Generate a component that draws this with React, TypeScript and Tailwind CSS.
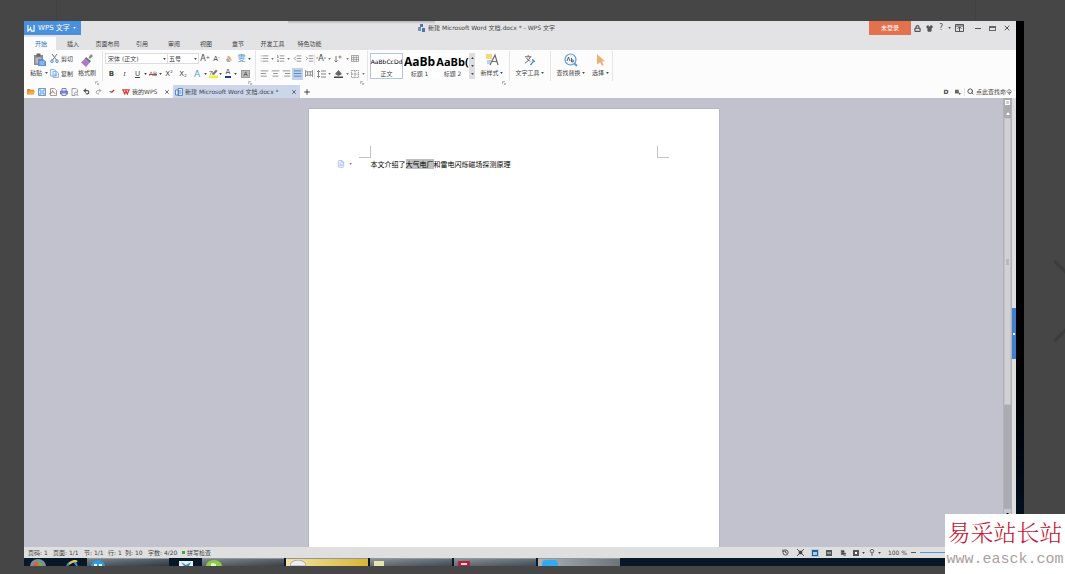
import { useState } from "react";
import type { ReactNode } from "react";
import {
  AlignCenter,
  AlignJustify,
  AlignLeft,
  AlignRight,
  ChevronRight,
  FileText,
  History,
  IndentDecrease,
  IndentIncrease,
  List,
  ListOrdered,
  Lock,
  Plus,
  Redo2,
  Search,
  Shirt,
  Undo2,
  X,
} from "lucide-react";

const TABS = ["开始", "插入", "页面布局", "引用", "审阅", "视图", "章节", "开发工具", "特色功能"];

const STYLES = [
  { name: "正文", sample: "AaBbCcDd", cls: "text-[6px]" },
  { name: "标题 1", sample: "AaBb", cls: "font-['Open_Sans',sans-serif] text-[12px] font-bold" },
  { name: "标题 2", sample: "AaBb(", cls: "font-['Open_Sans',sans-serif] text-[11px] font-bold" },
];

function Caret({ className = "w-1" }: { className?: string }) {
  return (
    <span className={`flex shrink-0 justify-center ${className}`}>
      <svg viewBox="0 0 4 3" className="h-[2px] w-[3px]" aria-hidden>
        <path d="M0 0h4L2 3z" fill="currentColor" />
      </svg>
    </span>
  );
}

interface ToolProps {
  label: string;
  className?: string;
  caret?: string;
  children: ReactNode;
}

function Tool({ label, className = "w-3", caret, children }: ToolProps) {
  return (
    <button type="button" aria-label={label} className="flex h-3 shrink-0 items-center">
      <span className={`flex h-full items-center justify-center ${className}`}>{children}</span>
      {caret && <Caret className={caret} />}
    </button>
  );
}

function Divider({ className = "h-[30px]" }: { className?: string }) {
  return <span className={`w-px shrink-0 bg-[#e4e4e6] ${className}`} />;
}

function Launcher() {
  return (
    <div className="flex h-1 items-center justify-end pr-[3px]">
      <svg viewBox="0 0 4 4" className="size-1" fill="none" stroke="#aaa" strokeWidth=".8">
        <path d="M.5 3V.5H3M1.5 1.5l2 2M3.5 2v1.5H2" />
      </svg>
    </div>
  );
}

function TitleBar() {
  return (
    <header className="flex h-3.5 items-center bg-[linear-gradient(#b4b4b6,#e3e3e5)] bg-[size:147px_3px] bg-[position:264px_0] bg-no-repeat">
      <button
        type="button"
        className="flex h-full w-[57px] shrink-0 items-center gap-[3px] bg-[#4a90dc] pl-[3px] text-[7px] text-white"
      >
        <svg viewBox="0 0 9 8" className="h-[7px] w-2" fill="none" stroke="white" strokeWidth="1.3">
          <path d="M1 0v7l3-3 1 3h3V0M4 4V2" />
        </svg>
        WPS 文字
        <Caret className="w-1" />
      </button>
      <div className="flex flex-1 items-center justify-center gap-[3px] pl-[22px] text-[#444]">
        <svg viewBox="0 0 8 8" className="size-2">
          <path d="M1 3h3v4H1z" fill="#7791b8" />
          <path d="M3 0h3v3H3zM5 4h3v4H5z" fill="#4f75af" />
        </svg>
        <h1>新建 Microsoft Word 文档.docx * - WPS 文字</h1>
      </div>
      <button type="button" className="h-full w-[42px] shrink-0 bg-[#e4714e] text-white">
        未登录
      </button>
      <div className="flex h-full w-[105px] shrink-0 items-center text-[#555]">
        <Tool label="锁定">
          <Lock className="size-[7px]" strokeWidth={4} />
        </Tool>
        <Tool label="皮肤">
          <Shirt className="size-[7px]" fill="#555" />
        </Tool>
        <Tool label="帮助" caret="w-1" className="w-3 text-[8px]">
          ?
        </Tool>
        <Divider className="h-2 bg-[#c4c4c6]" />
        <Tool label="功能区" className="w-3.5">
          <svg viewBox="0 0 9 8" className="h-2 w-[9px]" fill="none" stroke="#555">
            <path d="M.5.5h8v7h-8zM.5 2h8M4.500 7V3M2.500 4.800l2-2 2 2" />
          </svg>
        </Tool>
        <Divider className="mx-[2px] h-2 bg-[#c4c4c6]" />
        <Tool label="最小化" className="w-3.5">
          <span className="h-px w-1.5 bg-[#555]" />
        </Tool>
        <Tool label="最大化" className="w-3.5">
          <span className="h-[5px] w-[7px] border border-t-2 border-[#666]" />
        </Tool>
        <Tool label="关闭" className="w-4">
          <X className="size-2" strokeWidth={3} />
        </Tool>
      </div>
    </header>
  );
}

function MenuTabs() {
  const [active, setActive] = useState("开始");
  return (
    <nav className="mt-[2px] flex h-[13px]">
      {TABS.map((tab) => (
        <button
          key={tab}
          type="button"
          onClick={() => setActive(tab)}
          className={`flex items-center justify-center pl-[2px] ${tab.length > 2 ? "w-[37px]" : "w-8"} ${
            tab === active ? "bg-[#fcfcfc] text-[#2f73c8]" : "text-[#444]"
          }`}
        >
          {tab}
        </button>
      ))}
    </nav>
  );
}

function ClipboardGroup() {
  return (
    <div className="w-[78px] shrink-0">
      <div className="flex h-[30px] pl-1">
        <button type="button" className="flex w-[22px] flex-col items-center">
          <span className="flex h-[18px] items-center">
            <svg viewBox="0 0 13 14" className="h-3.5 w-[13px]">
              <path d="M1 2h9v10H1z" fill="#8b8b8b" />
              <path d="M3.500.5h4v3h-4z" fill="#666" />
              <path d="M2.500 4.500h6v6h-6z" fill="#b9b9b9" />
              <path d="M5 6h5l3 2.500V13H5z" fill="#5b8fd4" />
              <path d="M6.500 9h5M6.500 11h5" stroke="#dce9fa" strokeWidth=".8" />
            </svg>
          </span>
          <span className="flex items-center">
            粘贴
            <Caret className="ml-[2px] w-1" />
          </span>
        </button>
        <div className="flex w-[27px] flex-col">
          <button type="button" className="flex h-[15px] items-center gap-[2px]">
            <svg viewBox="0 0 9 9" className="size-[9px]" fill="none" strokeWidth="1">
              <path d="M2 0l4.500 6M7 0L2.500 6" stroke="#777" />
              <circle cx="2" cy="7.200" r="1.300" stroke="#4a86cf" />
              <circle cx="7" cy="7.200" r="1.300" stroke="#4a86cf" />
            </svg>
            剪切
          </button>
          <button type="button" className="flex h-[15px] items-center gap-[2px]">
            <svg viewBox="0 0 9 9" className="size-[9px]" fill="#eaf2fc" stroke="#7da6da" strokeWidth=".8">
              <path d="M.5.5h4L6 2v5H.5zM3 2.500h3.500L8.500 4v4.500H3z" />
              <path d="M4 5h3M4 6.500h3" />
            </svg>
            复制
          </button>
        </div>
        <button type="button" className="flex w-5 flex-col items-center">
          <span className="flex h-[18px] items-center">
            <svg viewBox="0 0 12 13" className="h-[13px] w-3">
              <path d="M7.500 3.500L10 0l2 2-3 3z" fill="#8b8b91" />
              <path d="M5 3l5 4-1.500 2L3.500 5z" fill="#767680" />
              <path d="M3.500 5l5 4-3.500 4-5-4.500z" fill="#b078c8" />
            </svg>
          </span>
          格式刷
        </button>
      </div>
      <Launcher />
    </div>
  );
}

function FontGroup() {
  return (
    <div className="w-[152px] shrink-0 pl-[2px]">
      <div className="flex h-[15px] items-center">
        <div className="flex h-[11px] w-[63px] items-center border border-[#dcdce0] bg-white">
          <select aria-label="字体" className="min-w-0 flex-1 appearance-none pl-[2px] outline-none">
            <option>宋体 (正文)</option>
          </select>
          <Caret className="w-1.5" />
        </div>
        <div className="-ml-px flex h-[11px] w-8 items-center border border-[#dcdce0] bg-white">
          <select aria-label="字号" className="min-w-0 flex-1 appearance-none pl-[1px] outline-none">
            <option>五号</option>
          </select>
          <Caret className="w-1.5" />
        </div>
        <Tool label="增大字号" className="w-3 text-[8px]">
          A<span className="-mt-1 text-[5px]">+</span>
        </Tool>
        <Tool label="减小字号" className="w-[11px] text-[7px]">
          A<span className="-mt-1 text-[5px]">-</span>
        </Tool>
        <Tool label="清除格式" className="w-[13px]">
          <svg viewBox="0 0 9 9" className="size-2">
            <path d="M1 5l3-4 2 1 2 4-4 2z" fill="#efc59a" />
            <path d="M1 5l2-1 3 4H3z" fill="#8fa9cf" />
            <path d="M3 1l3 4" stroke="#d4884a" />
          </svg>
        </Tool>
        <Tool label="拼音指南" className="w-[13px] text-[8px] text-[#5b93d3]" caret="w-[3px]">
          雯
        </Tool>
      </div>
      <div className="flex h-[15px] items-center text-[7px]">
        <Tool label="加粗" className="w-[13px] font-bold">B</Tool>
        <Tool label="倾斜" className="w-[13px] font-serif italic">I</Tool>
        <Tool label="下划线" className="w-[13px] underline" caret="w-[3px]">U</Tool>
        <Tool label="删除线" className="w-3 text-[6px] text-[#8c5560] line-through" caret="w-[3px]">AB</Tool>
        <Tool label="上标" className="w-3.5">
          X<span className="-mt-1 text-[4px]">2</span>
        </Tool>
        <Tool label="下标" className="w-3.5">
          X<span className="mt-1 text-[4px]">2</span>
        </Tool>
        <Tool label="文字效果" className="w-3.5 text-[9px] text-[#5d97dc]" caret="w-[3px]">A</Tool>
        <Tool label="突出显示" caret="w-[3px]">
          <svg viewBox="0 0 9 9" className="size-[9px]">
            <path d="M0 6.500h9V9H0z" fill="#f5ee2a" />
            <path d="M3 5l4-4.500L8.500 2 5 6z" fill="#777" />
            <path d="M.5 2.500h3M1 6l2-4 1 4" stroke="#777" strokeWidth=".7" fill="none" />
          </svg>
        </Tool>
        <Tool label="字体颜色" caret="w-[3px]">
          <span className="border-b-2 border-[#26339c] px-px text-[7px] leading-[7px]">A</span>
        </Tool>
        <Tool label="字符底纹" className="w-[17px]">
          <span className="border border-[#999] bg-[#bbb] px-px text-[6px] leading-[6px]">A</span>
        </Tool>
      </div>
      <Launcher />
    </div>
  );
}

function ParagraphGroup() {
  return (
    <div className="w-[111px] shrink-0 pl-[2px] text-[#777]">
      <div className="flex h-[15px] items-center">
        <Tool label="项目符号" caret="w-1"><List className="size-[9px]" /></Tool>
        <Tool label="编号" caret="w-1"><ListOrdered className="size-[9px]" /></Tool>
        <Tool label="减少缩进" className="w-3.5"><IndentDecrease className="size-[9px]" /></Tool>
        <Tool label="增加缩进" className="w-2.5"><IndentIncrease className="size-[9px]" /></Tool>
        <Divider className="h-[10px]" />
        <Tool label="中文版式" className="w-3 text-[8px] text-[#444]" caret="w-1">
          <span className="text-[5px]">"</span>A<span className="text-[5px]">"</span>
        </Tool>
        <Tool label="排序" className="w-3.5" caret="w-1">
          <svg viewBox="0 0 8 8" className="size-2" fill="none" stroke="#777">
            <path d="M2 1v6M.5 5.500L2 7l1.500-1.500" />
            <path d="M4.500 2h3M6 .5v3" stroke="#b44" strokeWidth=".8" />
          </svg>
        </Tool>
        <Tool label="制表位">
          <svg viewBox="0 0 9 8" className="h-[7px] w-2" fill="none" stroke="#888" strokeWidth=".8">
            <path d="M.5.500h8v7h-8zM.5 3h8M.5 5.300h8M3 .5v7M6 .5v7" />
          </svg>
        </Tool>
      </div>
      <div className="flex h-[15px] items-center">
        <span className="flex pl-[1px]">
          <Tool label="左对齐" className="w-[11px]"><AlignLeft className="size-[9px]" /></Tool>
          <Tool label="居中" className="w-[11px]"><AlignCenter className="size-[9px]" /></Tool>
          <Tool label="右对齐" className="w-[11px]"><AlignRight className="size-[9px]" /></Tool>
          <Tool label="两端对齐" className="w-[11px] bg-[#bdd3f0]">
            <AlignJustify className="size-[9px] text-[#4a6f9f]" />
          </Tool>
          <Tool label="分散对齐" className="w-[11px]">
            <svg viewBox="0 0 9 8" className="h-[7px] w-2" fill="none" stroke="#777" strokeWidth=".9">
              <path d="M.5 0v8M8.500 0v8M1 2h7M1 6h7M3 2v4M6 2v4" />
            </svg>
          </Tool>
        </span>
        <Divider className="h-[10px]" />
        <Tool label="行距" caret="w-1">
          <svg viewBox="0 0 9 8" className="h-2 w-[9px]" fill="none" stroke="#777" strokeWidth=".9">
            <path d="M1.500.5v7M0 2L1.500.5 3 2M0 6l1.500 1.500L3 6M4 1h5M4 4h5M4 7h5" />
          </svg>
        </Tool>
        <Tool label="底纹颜色" className="w-3.5" caret="w-1">
          <svg viewBox="0 0 9 8" className="h-2 w-[9px]">
            <path d="M1 4l3.500-4L8 4 4.500 6z" fill="#666" />
            <path d="M0 6.500h9V8H0z" fill="#444" />
          </svg>
        </Tool>
        <Tool label="边框" caret="w-1">
          <svg viewBox="0 0 8 8" className="size-2" fill="none" stroke="#888" strokeWidth=".8">
            <path d="M.5.5h7v7h-7zM4 .5v7M.5 4h7" strokeDasharray="1.500 .6" />
          </svg>
        </Tool>
      </div>
      <Launcher />
    </div>
  );
}

function StylesGroup() {
  return (
    <div className="flex w-[141px] shrink-0 pl-[2px]">
      <div className="mt-[2px] flex h-[26px]">
        {STYLES.map((s, i) => (
          <button
            key={s.name}
            type="button"
            className={`flex w-[33px] flex-col items-center bg-white pt-px ${
              i === 0 ? "ring-1 ring-[#b5c3e4] ring-inset" : ""
            }`}
          >
            <span className={`flex h-4 items-center whitespace-nowrap text-black ${s.cls}`}>{s.sample}</span>
            <span className="leading-[8px]">{s.name}</span>
          </button>
        ))}
        <span className="flex w-[6px] flex-col items-center justify-between bg-[#dedee0] py-1">
          <Caret className="rotate-180" />
          <Caret />
          <Caret />
        </span>
      </div>
      <div className="flex-1">
        <BigTool label="新样式">
          <svg viewBox="0 0 13 14" className="h-3.5 w-[13px]" fill="none">
            <path d="M0 1h6v5H0z" fill="#f7d77c" />
            <path d="M4 12L9 2l3 10M6 8.500h5" stroke="#6c6c70" strokeWidth="1.200" />
            <path d="M1 8h4M1 10h3" stroke="#79a6df" />
          </svg>
        </BigTool>
        <Launcher />
      </div>
    </div>
  );
}

function BigTool({ label, children }: { label: string; children: ReactNode }) {
  return (
    <button type="button" className="flex h-[30px] w-full flex-col items-center">
      <span className="flex h-[18px] items-center">{children}</span>
      <span className="flex items-center whitespace-nowrap">
        {label}
        <Caret className="ml-px w-1" />
      </span>
    </button>
  );
}

function Ribbon() {
  return (
    <section className="flex h-[35px] overflow-hidden bg-[#fcfcfc] pt-px leading-[8px] text-[#444]">
      <ClipboardGroup />
      <Divider />
      <FontGroup />
      <Divider />
      <ParagraphGroup />
      <Divider />
      <StylesGroup />
      <Divider />
      <div className="w-10 shrink-0">
        <BigTool label="文字工具">
          <svg viewBox="0 0 13 13" className="size-3" fill="none" stroke="#666">
            <path d="M1 3h7M4.500 1v2M7 3Q5 8 1 10M2.500 4Q4 7 7 8" />
            <path d="M7 12l4-5M9.500 5.500Q9 8 12 8" stroke="#4a86cf" strokeWidth="1.400" />
          </svg>
        </BigTool>
      </div>
      <Divider />
      <div className="flex w-[61px] shrink-0 pl-[2px]">
        <div className="w-9">
          <BigTool label="查找替换">
            <svg viewBox="0 0 14 14" className="size-3.5" fill="none">
              <circle cx="6.500" cy="6.500" r="5.500" stroke="#5c9add" strokeWidth="1.200" fill="#eff6fd" />
              <path d="M10.500 10.500L13 13" stroke="#5c9add" strokeWidth="2" />
              <path d="M3 8l1.500-4L6 8M7.500 5v4h1.500q1.300-1.500 0-2H7.500" stroke="#555" strokeWidth=".9" />
            </svg>
          </BigTool>
        </div>
        <div className="flex-1">
          <BigTool label="选择">
            <svg viewBox="0 0 9 13" className="h-3 w-2">
              <path d="M0 0l9 8H5.500l2 4-2 1-2-4L0 11.500z" fill="#ecae74" />
            </svg>
          </BigTool>
        </div>
      </div>
      <Divider />
    </section>
  );
}

function QuickIcons() {
  return (
    <div className="flex shrink-0 items-center text-[#555]">
      <Tool label="打开" className="w-[11px]">
        <svg viewBox="0 0 9 8" className="h-[7px] w-2">
          <path d="M0 1h3l1 1h4v5H0z" fill="#d98c32" />
          <path d="M2 3.500h7L7.500 7.500H0z" fill="#f4a840" />
        </svg>
      </Tool>
      <Tool label="保存" className="w-[11px]">
        <svg viewBox="0 0 8 8" className="size-2" fill="#e1edfa" stroke="#5a93d6" strokeWidth=".9">
          <path d="M.5.500h7v7h-7zM2 .5v2.500h4V.5M2 7.500V5h4v2.500" />
        </svg>
      </Tool>
      <Tool label="输出为PDF" className="w-[11px]">
        <svg viewBox="0 0 8 8" className="size-2" fill="none" stroke="#888" strokeWidth=".8">
          <path d="M1.500.5h4L7.500 2.500v5h-6z" />
          <path d="M0 6Q4 5 3.500 2.500 4 5 6.500 5.500" stroke="#c65b4a" />
        </svg>
      </Tool>
      <Tool label="打印" className="w-[11px]">
        <svg viewBox="0 0 8 8" className="size-2" stroke="#6d70c4" strokeWidth=".9">
          <path d="M2 3V.5h4V3" fill="white" />
          <path d="M.5 3h7v3h-7z" fill="#8d91d8" />
          <path d="M2 5h4v2.500H2z" fill="white" />
        </svg>
      </Tool>
      <Tool label="打印预览" className="w-[11px]">
        <svg viewBox="0 0 8 8" className="size-2" fill="none" stroke="#888" strokeWidth=".8">
          <path d="M1 .5h4L6.500 2v2M1 .5v7h3" />
          <circle cx="5" cy="5.500" r="1.500" />
          <path d="M6 6.500l1.500 1" />
        </svg>
      </Tool>
      <Tool label="撤销"><Undo2 className="size-[7px]" strokeWidth={4} /></Tool>
      <Tool label="恢复"><Redo2 className="size-[7px] text-[#999]" strokeWidth={3} /></Tool>
      <Tool label="快速访问" className="w-4">
        <svg viewBox="0 0 7 7" className="size-1.5">
          <path d="M0 3l3-1v3z" fill="#3b9b62" />
          <path d="M3 4l3-3" stroke="#b33" strokeWidth="1.500" />
        </svg>
      </Tool>
    </div>
  );
}

function DocumentTabs() {
  return (
    <div className="flex h-[13px] items-center bg-[#fcfcfc] pl-px text-[#444]">
      <QuickIcons />
      <div className="flex h-full w-[53px] shrink-0 items-center gap-[2px] pr-[2px] pl-[2px] whitespace-nowrap">
        <svg viewBox="0 0 9 7" className="h-1.5 w-2" fill="none" stroke="#df3c39" strokeWidth="1.400">
          <path d="M0 1h9M1 1l2 5 1.500-4L6 6l2-5" />
        </svg>
        <button type="button" className="mr-auto">我的WPS</button>
        <Tool label="关闭" className="w-2"><X className="size-[6px]" strokeWidth={3} /></Tool>
      </div>
      <div className="flex h-full w-[127px] shrink-0 items-center gap-[2px] bg-[#ccd6eb] pr-[2px] pl-[2px] whitespace-nowrap">
        <svg viewBox="0 0 8 8" className="size-2" fill="#eef4fc" stroke="#4a7fca" strokeWidth=".9">
          <path d="M.5 2h3v5h-3zM3 .5h4.500v7H3z" />
          <path d="M4 3h2.500M4 5h2.500" />
        </svg>
        <button type="button" className="mr-auto">新建 Microsoft Word 文档.docx *</button>
        <Tool label="关闭" className="w-2"><X className="size-[6px]" strokeWidth={3} /></Tool>
      </div>
      <Tool label="新建" className="w-3.5"><Plus className="size-2" strokeWidth={3} /></Tool>
      <div className="ml-auto flex shrink-0 items-center pr-1">
        <Tool label="文档" className="w-3 text-[6px] font-bold">D</Tool>
        <Tool label="窗口" className="w-3">
          <svg viewBox="0 0 8 8" className="size-1.5" fill="#666">
            <path d="M0 1h5v5H0z" />
            <path d="M4 4l4 2-2 2z" />
          </svg>
        </Tool>
        <Divider className="mr-[2px] h-2 bg-[#d4d4d4]" />
        <button type="button" className="flex items-center gap-[2px]">
          <Search className="size-[7px]" strokeWidth={3} />
          点此查找命令
        </button>
      </div>
    </div>
  );
}

function Workspace() {
  return (
    <main className="flex min-h-0 flex-1 bg-[#c2c2ce]">
      <div className="flex flex-1 justify-center pt-[11px]">
        <article className="w-full max-w-[410px] bg-white pt-[37px] shadow-[0_0_1px_#777]">
          <div className="flex justify-between px-[50px]">
            <span className="size-3 border-r border-b border-[#c3c3c3]" />
            <span className="size-3 border-b border-l border-[#c3c3c3]" />
          </div>
          <div className="flex h-[11px] items-center pl-7">
            <span className="flex w-[34px] items-center gap-1">
              <FileText className="size-2 text-[#86abe1]" />
              <Caret className="w-1 opacity-50" />
            </span>
            <p className="font-['Noto_Sans_CJK_SC',sans-serif] text-[7px] leading-[10px] text-black">
              本文介绍了<mark className="inline-block bg-[#bdbdbd] text-black">大气电厂</mark>和雷电闪烁磁场探测原理
            </p>
          </div>
        </article>
      </div>
      <div className="flex w-[9px] shrink-0 flex-col border-x border-[#b2b2b6] bg-[#aaabb3]">
        <span className="flex h-[9px] items-center justify-center bg-[#aaa]">
          <span className="h-[5px] w-[5px] border border-white bg-[#ccc]" />
        </span>
        <span className="mt-px flex h-[10px] items-center justify-center bg-[#ababaf]">
          <svg viewBox="0 0 4 3" className="h-[3px] w-1"><path d="M0 3h4L2 0z" fill="white" /></svg>
        </span>
        <span className="flex h-[64%] items-center justify-center border border-[#c2c2c4] bg-[#d1d1d3]">
          <span className="h-1.5 w-[3px] bg-[#b9b9bb]" />
        </span>
        <span className="mt-auto mb-7 flex h-[10px] items-center justify-center bg-[#c8c8cc]">
          <Caret />
        </span>
      </div>
      <div className="flex w-1 shrink-0 flex-col justify-center bg-[#dedee0] pt-[22px]">
        <button type="button" aria-label="任务窗格" className="flex h-[51px] items-center justify-center bg-[#3f7fd0]">
          <span className="size-[2px] bg-white" />
        </button>
      </div>
    </main>
  );
}

function StatusBar() {
  const [zoom, setZoom] = useState(50);
  return (
    <footer className="flex h-[11px] shrink-0 items-center bg-[#dfdfe0] pl-1 whitespace-nowrap text-[#444]">
      <span className="w-[25px]">页码: 1</span>
      <span className="w-[31px]">页面: 1/1</span>
      <span className="w-[22px]">节: 1/1</span>
      <Divider className="mr-px h-2 bg-[#bbb]" />
      <span className="w-[17px]">行: 1</span>
      <span className="w-[20px]">列: 10</span>
      <Divider className="mr-[2px] h-2 bg-[#bbb]" />
      <span className="w-[31px]">字数: 4/20</span>
      <Divider className="mr-[2px] h-2 bg-[#bbb]" />
      <button type="button" className="flex items-center gap-[2px]">
        <span className="size-[3px] bg-[#43a53c]" />
        拼写检查
      </button>
      <Divider className="ml-px h-2 bg-[#bbb]" />
      <div className="ml-auto flex items-center">
        <Tool label="历史" className="w-3.5"><History className="size-[7px]" strokeWidth={3} /></Tool>
        <Divider className="h-2 bg-[#bbb]" />
        <Tool label="全屏" className="w-3.5">
          <svg viewBox="0 0 8 8" className="size-[7px]">
            <path d="M2 2h4v4H2z" fill="#444" />
            <path d="M0 0l8 8M8 0L0 8" stroke="#444" />
          </svg>
        </Tool>
        <Tool label="页面视图" className="w-3.5">
          <span className="flex size-2 items-center justify-center bg-[#a9cbea]">
            <span className="size-1.5 border border-t-2 border-[#2d608f]" />
          </span>
        </Tool>
        <Tool label="大纲视图" className="w-3.5">
          <span className="size-1.5 border-x border-y-2 border-[#555] bg-[#999]" />
        </Tool>
        <Tool label="网页视图" className="w-3.5">
          <svg viewBox="0 0 7 8" className="h-[7px] w-1.5">
            <path d="M1 1h4v6H1z" fill="#777" />
            <path d="M2 3h3M2 5h5M4 7h3" stroke="#333" />
          </svg>
        </Tool>
        <Tool label="阅读版式" caret="w-1">
          <span className="size-1.5 border-2 border-[#555] bg-white" />
        </Tool>
        <Tool label="定位" caret="w-1">
          <svg viewBox="0 0 6 8" className="h-[7px] w-1.5" fill="none" stroke="#555">
            <circle cx="3" cy="2.500" r="2" />
            <path d="M3 4.500V8" />
          </svg>
        </Tool>
        <span className="ml-1.5">100 %</span>
        <span className="mx-1 h-px w-[5px] bg-[#555]" />
        <input
          type="range"
          aria-label="缩放"
          value={zoom}
          onChange={(e) => setZoom(Number(e.target.value))}
          className="h-px w-24 appearance-none bg-[#5b93dd] [&::-webkit-slider-thumb]:h-2 [&::-webkit-slider-thumb]:w-1 [&::-webkit-slider-thumb]:appearance-none [&::-webkit-slider-thumb]:bg-[#5b93dd]"
        />
      </div>
    </footer>
  );
}

const RUNNING = "flex w-[82px] shrink-0 items-end overflow-hidden border-t border-[#8f979d] pl-1";

function Taskbar() {
  return (
    <div className="flex h-2 shrink-0 gap-[2px] overflow-hidden bg-[#091827]">
      <div className="flex w-[61px] shrink-0 items-end gap-5 pl-[6px]">
        <svg viewBox="0 0 16 7" className="h-[7px] w-4">
          <path d="M0 7a8 7 0 0 1 16 0z" fill="#779099" />
          <path d="M3 7q1-4 5-4v4z" fill="#e55a3d" />
          <path d="M8 3q4 0 5 4H8z" fill="#6faa57" />
        </svg>
        <svg viewBox="0 0 12 6" className="h-1.5 w-3" fill="none" strokeWidth="2">
          <path d="M1 6q3-5 7-4 2 1 3 4" stroke="#3b8fd0" />
          <path d="M3 4Q9-1 11 2" stroke="#e7c346" />
        </svg>
      </div>
      <div className={`${RUNNING} bg-linear-to-br from-[#7c858c] to-[#2c3944]`}>
        <svg viewBox="0 0 14 6" className="h-1.5 w-3.5">
          <path d="M0 6a7 6 0 0 1 14 0z" fill="#2e9be0" />
          <path d="M3 6V4h3v2M8 6V4h3v2" fill="white" />
        </svg>
      </div>
      <div className="flex w-[29px] shrink-0 items-end justify-center">
        <svg viewBox="0 0 14 5" className="h-[5px] w-3.5">
          <path d="M0 0h14v5H0z" fill="#e7f1f7" />
          <path d="M2 1l5 3 5-3-2 4H5z" fill="#3b91c6" />
        </svg>
      </div>
      <div className={`${RUNNING} bg-linear-to-br from-[#858b8e] to-[#384148]`}>
        <svg viewBox="0 0 16 6" className="h-1.5 w-4">
          <path d="M0 6a8 6 0 0 1 16 0z" fill="#8dcc49" />
          <path d="M5 6V4l2-1 3 1v2z" fill="#e9f6d7" />
        </svg>
      </div>
      <div className={`${RUNNING} bg-linear-to-r from-[#f2e39e] to-[#d8b62f]`}>
        <svg viewBox="0 0 16 6" className="h-1.5 w-4">
          <path d="M0 6a8 6 0 0 1 16 0z" fill="#eee" stroke="#a8a8a8" />
        </svg>
      </div>
      <div className={`${RUNNING} bg-linear-to-br from-[#8d9498] to-[#3e4b55]`}>
        <span className="h-[5px] w-2.5 bg-[#e8e3ae]" />
      </div>
      <div className={`${RUNNING} bg-linear-to-br from-[#8d9498] to-[#3e4b55]`}>
        <span className="flex h-[5px] w-3 items-center justify-center bg-[#b3233d]">
          <span className="h-[2px] w-1.5 bg-[#f3d3d8]" />
        </span>
      </div>
      <div className={`${RUNNING} bg-linear-to-r from-[#adb1b4] to-[#6d757b]`}>
        <span className="h-1.5 w-4 rounded-t bg-[#34a9f0]" />
      </div>
    </div>
  );
}

export default function App() {
  return (
    <div className="relative flex min-h-screen flex-col overflow-hidden bg-[#464646] pr-[41px] pb-2 pl-6 font-['DejaVu_Sans','Noto_Sans_CJK_SC',sans-serif] text-[6px] leading-[8px]">
      <div className="mr-12 ml-8 h-[21px] shrink-0 border-x border-[#414141]" />
      <div className="flex flex-1 bg-black">
        <div className="flex min-w-0 flex-1 flex-col bg-[#e3e3e5]">
          <TitleBar />
          <MenuTabs />
          <Ribbon />
          <DocumentTabs />
          <Workspace />
          <StatusBar />
          <Taskbar />
        </div>
        <div className="w-2 shrink-0 bg-linear-to-b from-black via-black to-[#03182a]" />
      </div>
      <ChevronRight
        className="pointer-events-none absolute top-[223px] -right-[88px] size-[156px] text-[#3c3c3c]"
        strokeWidth={0.5}
      />
      <aside className="absolute right-0 bottom-0 flex h-[60px] w-[120px] flex-col items-center bg-white pt-1 whitespace-nowrap">
        <span className="font-['Noto_Serif_CJK_SC','Noto_Sans_CJK_SC',serif] text-[23px] leading-7 font-light text-[#c41230]">
          易采站长站
        </span>
        <a href="#" className="font-['Liberation_Mono',monospace] text-[15px] leading-7 text-[#aaa0a0]">
          www.easck.com
        </a>
      </aside>
    </div>
  );
}
